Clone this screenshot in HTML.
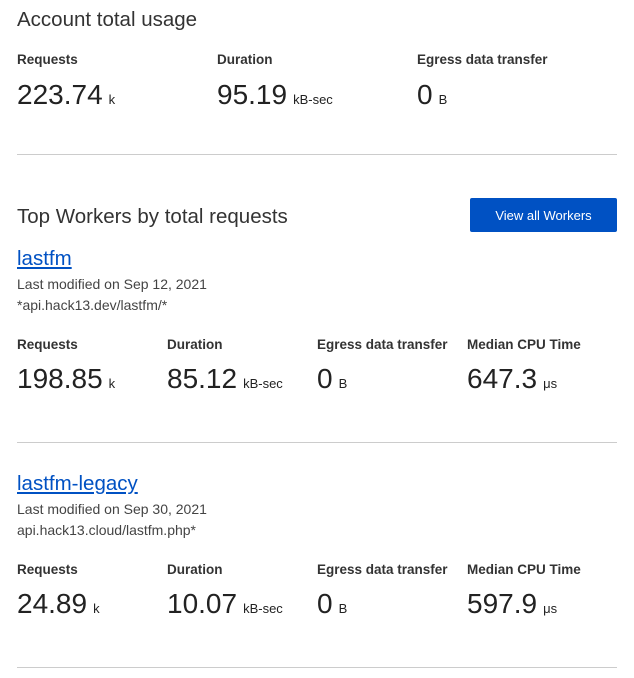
<!DOCTYPE html>
<html><head><style>
body{margin:0;background:#fff;font-family:"Liberation Sans",sans-serif;color:#222;width:634px;height:678px;position:relative;overflow:hidden}
.a{position:absolute;white-space:nowrap}
.h{font-size:20.5px;color:#333}
.l{font-size:13.5px;font-weight:bold;color:#333}
.v{font-size:28px;color:#222}
.v span{font-size:13px;margin-left:6px}
.lk{font-size:20.5px;color:#0051c3;text-decoration:underline}
.s{font-size:14px;color:#444}
.hr{position:absolute;left:17px;width:600px;height:1px;background:#ccc}
.btn{position:absolute;left:470px;top:198px;width:147px;height:34px;background:#0051c3;color:#fff;font-size:13px;border-radius:2px;display:flex;align-items:center;justify-content:center}
</style></head><body>
<div class="a h" style="left:17px;top:8px">Account total usage</div>
<div class="a l" style="left:17px;top:52px">Requests</div>
<div class="a l" style="left:217px;top:52px">Duration</div>
<div class="a l" style="left:417px;top:52px">Egress data transfer</div>
<div class="a v" style="left:17px;top:79px">223.74<span>k</span></div>
<div class="a v" style="left:217px;top:79px">95.19<span>kB-sec</span></div>
<div class="a v" style="left:417px;top:79px">0<span>B</span></div>
<div class="hr" style="top:154px"></div>

<div class="a h" style="left:17px;top:205px">Top Workers by total requests</div>
<div class="btn">View all Workers</div>
<div class="a lk" style="left:17px;top:247px">lastfm</div>
<div class="a s" style="left:17px;top:276px">Last modified on Sep 12, 2021</div>
<div class="a s" style="left:17px;top:297px">*api.hack13.dev/lastfm/*</div>
<div class="a l" style="left:17px;top:337px">Requests</div>
<div class="a l" style="left:167px;top:337px">Duration</div>
<div class="a l" style="left:317px;top:337px">Egress data transfer</div>
<div class="a l" style="left:467px;top:337px">Median CPU Time</div>
<div class="a v" style="left:17px;top:363px">198.85<span>k</span></div>
<div class="a v" style="left:167px;top:363px">85.12<span>kB-sec</span></div>
<div class="a v" style="left:317px;top:363px">0<span>B</span></div>
<div class="a v" style="left:467px;top:363px">647.3<span>μs</span></div>
<div class="hr" style="top:442px"></div>

<div class="a lk" style="left:17px;top:472px">lastfm-legacy</div>
<div class="a s" style="left:17px;top:501px">Last modified on Sep 30, 2021</div>
<div class="a s" style="left:17px;top:522px">api.hack13.cloud/lastfm.php*</div>
<div class="a l" style="left:17px;top:562px">Requests</div>
<div class="a l" style="left:167px;top:562px">Duration</div>
<div class="a l" style="left:317px;top:562px">Egress data transfer</div>
<div class="a l" style="left:467px;top:562px">Median CPU Time</div>
<div class="a v" style="left:17px;top:588px">24.89<span>k</span></div>
<div class="a v" style="left:167px;top:588px">10.07<span>kB-sec</span></div>
<div class="a v" style="left:317px;top:588px">0<span>B</span></div>
<div class="a v" style="left:467px;top:588px">597.9<span>μs</span></div>
<div class="hr" style="top:667px"></div>
</body></html>
